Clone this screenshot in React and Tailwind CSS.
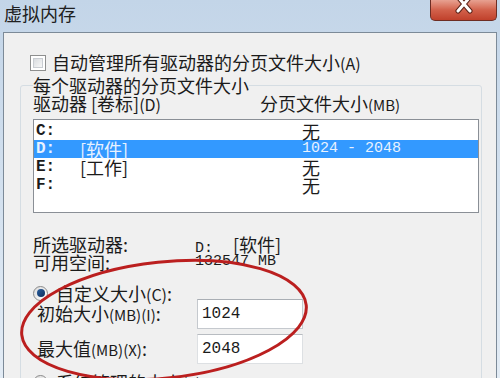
import React from "react";

const cjk = "font-['Noto_Sans_CJK_SC',sans-serif]";
const mono = "font-['Liberation_Mono','Noto_Sans_CJK_SC',monospace]";

const drives = [
  { letter: "C:", label: "", size: "无" },
  { letter: "D:", label: "[软件]", size: "1024 - 2048", selected: true },
  { letter: "E:", label: "[工作]", size: "无" },
  { letter: "F:", label: "", size: "无" },
];

const CloseButton = () => (
  <div className="w-[67px] h-[21px] rounded-b-[5px] border border-t-0 border-[#6d2d23] bg-gradient-to-b from-[#e7a191] via-[#d2614b] to-[#c0402b] flex items-start justify-center">
    <svg width="22" height="14" viewBox="0 0 22 14">
      <path d="M5 -3 L17 11 M17 -3 L5 11" stroke="#5a2218" strokeWidth="5" strokeLinecap="round" />
      <path d="M5 -3 L17 11 M17 -3 L5 11" stroke="#ffffff" strokeWidth="3" strokeLinecap="round" />
    </svg>
  </div>
);

const Checkbox = () => (
  <div className="w-[16px] h-[16px] border border-[#8e8f8f] bg-white p-[2px]">
    <div className="w-full h-full border border-[#c9cdd2] bg-gradient-to-br from-[#d9dcdf] to-[#f7f7f7]" />
  </div>
);

const Radio = () => (
  <div className="w-[15px] h-[15px] rounded-full border border-[#8a8a8a] bg-gradient-to-br from-[#dcdcdc] to-white flex items-center justify-center">
    <div className="w-[8px] h-[8px] rounded-full bg-gradient-to-br from-[#2a5f9f] to-[#0d2e5c]" />
  </div>
);

export default function App() {
  return (
    <div className={`relative w-[500px] h-[378px] overflow-hidden bg-gradient-to-b from-[#c3d5e8] to-[#e3ecf5] text-[18px] leading-[18px] text-[#1b1b1b] ${cjk}`}>
      {/* title bar */}
      <div className="h-[32px] flex justify-between items-start">
        <div className="pl-[4px] pt-[4px] text-[18px] text-[#202020]">虚拟内存</div>
        <div className="mr-[3px]">
          <CloseButton />
        </div>
      </div>

      {/* client area */}
      <div className="ml-[3px] w-[494px] h-[360px] border border-[#7c8a98] bg-[#f0f0f0]">
        <div className="pl-[26px] pt-[20px] flex items-center gap-[6px]">
          <Checkbox />
          <span>
            自动管理所有驱动器的分页文件大小<span className="text-[16px]">(A)</span>
          </span>
        </div>

        <fieldset className="ml-[16px] mt-[3px] w-[461px] h-[320px] border border-[#d5dde3] rounded-[3px] pl-[12px] pr-[2px]">
          <legend className="px-0 leading-[20px]">每个驱动器的分页文件大小</legend>

          <div className="flex h-[18px] mt-[-1px]">
            <span className="w-[227px]">
              驱动器 [卷标]<span className="text-[16px]">(D)</span>
            </span>
            <span>
              分页文件大小<span className="text-[15px]">(MB)</span>
            </span>
          </div>

          <div className="mt-[7px] w-[446px] h-[94px] border border-[#8a8f96] bg-white pt-[2px]">
            {drives.map((d) => (
              <div
                key={d.letter}
                className={`flex h-[18px] items-center ${d.selected ? "bg-[#3399ff] text-[#e8f2ff]" : ""}`}
              >
                <span className={`w-[46px] pl-[2px] text-[16px] font-bold ${mono}`}>{d.letter}</span>
                <span className="w-[222px]">{d.label}</span>
                <span className={d.selected ? `text-[15px] ${mono}` : ""}>{d.size}</span>
              </div>
            ))}
          </div>

          <div className="mt-[22px] flex h-[18px]">
            <span className="w-[162px]">所选驱动器:</span>
            <span>
              <span className={`text-[15px] ${mono}`}>D:</span>
              <span className="pl-[20px]">[软件]</span>
            </span>
          </div>
          <div className="flex h-[18px]">
            <span className="w-[162px]">可用空间:</span>
            <span className={`text-[15px] ${mono}`}>132547 MB</span>
          </div>

          <div className="mt-[13px] flex items-center gap-[8px] h-[18px]">
            <Radio />
            <span>
              自定义大小<span className="text-[16px]">(C)</span>:
            </span>
          </div>

          <div className="mt-[-3px] flex items-center h-[30px]">
            <span className="w-[164px] pl-[4px]">
              初始大小<span className="text-[15px]">(MB)(I)</span>:
            </span>
            <div className={`w-[106px] h-[30px] border border-[#c5c9ce] border-t-[#a9aeb4] bg-white flex items-center pl-[4px] text-[16px] ${mono}`}>
              1024
            </div>
          </div>

          <div className="mt-[5px] flex items-center h-[30px]">
            <span className="w-[164px] pl-[4px]">
              最大值<span className="text-[15px]">(MB)(X)</span>:
            </span>
            <div className={`w-[106px] h-[30px] border border-[#dde0e3] border-t-[#b8bcc1] bg-white flex items-center pl-[4px] text-[16px] ${mono}`}>
              2048
            </div>
          </div>

          <div className="mt-[9px] flex items-center gap-[8px] h-[18px]">
            <div className="w-[15px] h-[15px] rounded-full border border-[#8a8a8a] bg-gradient-to-br from-[#dcdcdc] to-white" />
            <span>系统管理的大小<span className="text-[16px]">(Y)</span></span>
          </div>
        </fieldset>
      </div>

      {/* red annotation circle */}
      <svg className="absolute inset-0 pointer-events-none" width="500" height="378" viewBox="0 0 500 378">
        <ellipse
          cx="164"
          cy="320"
          rx="143"
          ry="58"
          transform="rotate(-6 164 320)"
          fill="none"
          stroke="#bb1f1f"
          strokeWidth="3"
        />
      </svg>
    </div>
  );
}
